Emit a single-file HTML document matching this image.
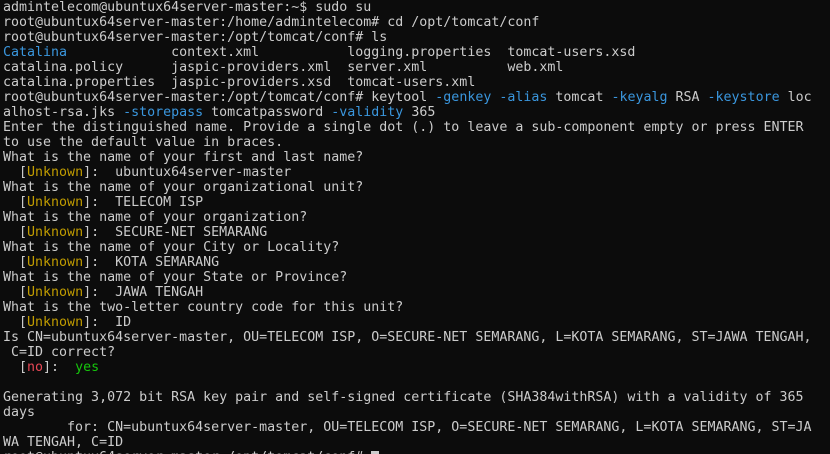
<!DOCTYPE html>
<html><head><meta charset="utf-8"><style>
html,body{margin:0;padding:0;background:#0c0c0c;width:830px;height:454px;overflow:hidden}
pre{margin:0;padding:0 0 0 3px;font-family:"DejaVu Sans Mono","Liberation Mono",monospace;font-size:13.3px;line-height:15px;color:#cccccc;white-space:pre;letter-spacing:0}
.b{color:#3a96dd}.y{color:#c19c00}.r{color:#e74856}.g{color:#16c60c}
.cur{display:inline-block;width:8px;height:13px;background:#cccccc;vertical-align:top;margin-top:1px}
</style></head><body><pre>admintelecom@ubuntux64server-master:~$ sudo su
root@ubuntux64server-master:/home/admintelecom# cd /opt/tomcat/conf
root@ubuntux64server-master:/opt/tomcat/conf# ls
<span class="b">Catalina</span>             context.xml           logging.properties  tomcat-users.xsd
catalina.policy      jaspic-providers.xml  server.xml          web.xml
catalina.properties  jaspic-providers.xsd  tomcat-users.xml
root@ubuntux64server-master:/opt/tomcat/conf# keytool <span class="b">-genkey</span> <span class="b">-alias</span> tomcat <span class="b">-keyalg</span> RSA <span class="b">-keystore</span> loc
alhost-rsa.jks <span class="b">-storepass</span> tomcatpassword <span class="b">-validity</span> 365
Enter the distinguished name. Provide a single dot (.) to leave a sub-component empty or press ENTER
to use the default value in braces.
What is the name of your first and last name?
  [<span class="y">Unknown</span>]:  ubuntux64server-master
What is the name of your organizational unit?
  [<span class="y">Unknown</span>]:  TELECOM ISP
What is the name of your organization?
  [<span class="y">Unknown</span>]:  SECURE-NET SEMARANG
What is the name of your City or Locality?
  [<span class="y">Unknown</span>]:  KOTA SEMARANG
What is the name of your State or Province?
  [<span class="y">Unknown</span>]:  JAWA TENGAH
What is the two-letter country code for this unit?
  [<span class="y">Unknown</span>]:  ID
Is CN=ubuntux64server-master, OU=TELECOM ISP, O=SECURE-NET SEMARANG, L=KOTA SEMARANG, ST=JAWA TENGAH,
 C=ID correct?
  [<span class="r">no</span>]:  <span class="g">yes</span>

Generating 3,072 bit RSA key pair and self-signed certificate (SHA384withRSA) with a validity of 365
days
        for: CN=ubuntux64server-master, OU=TELECOM ISP, O=SECURE-NET SEMARANG, L=KOTA SEMARANG, ST=JA
WA TENGAH, C=ID
root@ubuntux64server-master:/opt/tomcat/conf# <span class="cur"></span></pre></body></html>
